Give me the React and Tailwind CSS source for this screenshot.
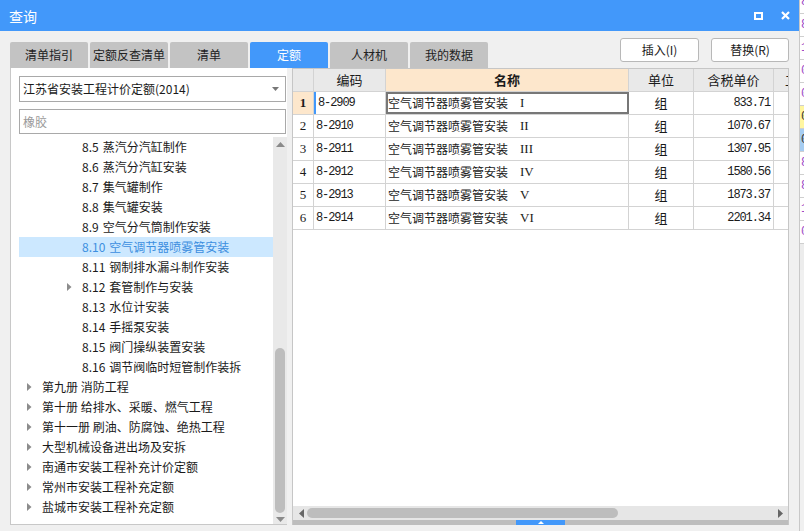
import React from "react";

const sub = [
  ["8.5", "蒸汽分汽缸制作"],
  ["8.6", "蒸汽分汽缸安装"],
  ["8.7", "集气罐制作"],
  ["8.8", "集气罐安装"],
  ["8.9", "空气分气筒制作安装"],
  ["8.10", "空气调节器喷雾管安装", "sel"],
  ["8.11", "钢制排水漏斗制作安装"],
  ["8.12", "套管制作与安装", "arrow"],
  ["8.13", "水位计安装"],
  ["8.14", "手摇泵安装"],
  ["8.15", "阀门操纵装置安装"],
  ["8.16", "调节阀临时短管制作装拆"],
];
const top = [
  "第九册 消防工程",
  "第十册 给排水、采暖、燃气工程",
  "第十一册 刷油、防腐蚀、绝热工程",
  "大型机械设备进出场及安拆",
  "南通市安装工程补充计价定额",
  "常州市安装工程补充定额",
  "盐城市安装工程补充定额",
];
const rows = [
  ["8-2909", "I", "833.71"],
  ["8-2910", "II", "1070.67"],
  ["8-2911", "III", "1307.95"],
  ["8-2912", "IV", "1580.56"],
  ["8-2913", "V", "1873.37"],
  ["8-2914", "VI", "2201.34"],
];
const strip = [
  ["8", ""],
  ["8", ""],
  ["1", ""],
  ["0", ""],
  ["0", ""],
  ["0", "y"],
  ["0", "b"],
  ["8", ""],
  ["8", ""],
  ["1", ""],
  ["0", ""],
];

const font = { fontFamily: '"Noto Sans CJK SC", "Noto Sans", sans-serif' };

function Arrow() {
  return (
    <svg width="5" height="8" viewBox="0 0 5 8" className="shrink-0">
      <path d="M0 0 L4.5 4 L0 8 Z" fill="#8c8c8c" />
    </svg>
  );
}

export default function App() {
  return (
    <div className="w-[804px] h-[531px] flex overflow-hidden bg-[#f0f0f0] text-[#1a1a1a]" style={font}>
      {/* window */}
      <div className="w-[799px] h-full flex flex-col bg-[#f0f0f0] shrink-0">
        {/* title */}
        <div className="h-[31px] bg-[#4298fa] flex items-center pl-[9px] pr-[9px] text-white">
          <span className="text-[14px] leading-none">查询</span>
          <div className="flex-1" />
          <div className="w-[9px] h-[8px] border-2 border-white mr-[18px]" />
          <svg width="9" height="9" viewBox="0 0 9 9">
            <path d="M1 1 L8 8 M8 1 L1 8" stroke="white" strokeWidth="2.2" />
          </svg>
        </div>
        {/* tabs & buttons */}
        <div className="h-[37px] flex pl-[10px] pr-[10px]">
          <div className="flex items-end gap-[2px] text-[12px]">
            {["清单指引", "定额反查清单", "清单", "定额", "人材机", "我的数据"].map((t) => (
              <div
                key={t}
                className={
                  "w-[78px] h-[26px] flex items-center justify-center rounded-t-[2px] " +
                  (t === "定额" ? "bg-[#4298fa] text-white" : "bg-[#c3c3c3] text-[#222]")
                }
              >
                {t}
              </div>
            ))}
          </div>
          <div className="flex-1" />
          <div className="flex gap-[12px] pt-[7px] text-[12px]">
            <div className="w-[79px] h-[24px] bg-white border border-[#b8b8b8] rounded-[3px] flex items-center justify-center">插入(I)</div>
            <div className="w-[78px] h-[24px] bg-white border border-[#b8b8b8] rounded-[3px] flex items-center justify-center">替换(R)</div>
          </div>
        </div>
        {/* content */}
        <div className="flex-1 flex gap-[5px] pl-[10px] pr-[10px] pb-[6px] min-h-0">
          {/* left panel */}
          <div className="w-[277px] bg-white border-l border-b border-[#c8c8c8] flex flex-col min-h-0">
            <div className="ml-[8px] mt-[8px] w-[267px] h-[26px] border border-[#a9a9a9] flex items-center pl-[3px] pr-[6px] text-[12px]">
              <span className="flex-1">江苏省安装工程计价定额(2014)</span>
              <svg width="7" height="4" viewBox="0 0 7 4"><path d="M0 0 L7 0 L3.5 4 Z" fill="#777" /></svg>
            </div>
            <div className="ml-[8px] mt-[7px] w-[267px] h-[25px] border border-[#a9a9a9] flex items-center pl-[3px] text-[12px] text-[#9a9a9a]">
              橡胶
            </div>
            <div className="flex-1 flex mt-[3px] min-h-0">
              <div className="flex-1 ml-[8px] flex flex-col text-[12px]">
                {sub.map(([n, t, f]) => (
                  <div
                    key={n}
                    className={"h-[20px] flex items-center " + (f === "sel" ? "bg-[#cce8ff] text-[#3d8fe0]" : "")}
                  >
                    <div className="w-[48px] shrink-0" />
                    <div className="w-[15px] shrink-0 flex items-center">{f === "arrow" ? <Arrow /> : null}</div>
                    <span>{n}</span>
                    <span className="ml-[4px]">{t}</span>
                  </div>
                ))}
                {top.map((t) => (
                  <div key={t} className="h-[20px] flex items-center">
                    <div className="w-[8px] shrink-0" />
                    <div className="w-[15px] shrink-0 flex items-center"><Arrow /></div>
                    <span>{t}</span>
                  </div>
                ))}
              </div>
              <div className="w-[14px] bg-[#e9e9e9] flex flex-col items-center">
                <svg width="9" height="5" viewBox="0 0 9 5" className="mt-[5px]"><path d="M0 5 L4.5 0 L9 5 Z" fill="#8a8a8a" /></svg>
                <div className="flex-1" />
                <div className="w-[10px] h-[165px] rounded-full bg-[#bdbdbd]" />
                <svg width="9" height="5" viewBox="0 0 9 5" className="mt-[4px] mb-[2px]"><path d="M0 0 L4.5 5 L9 0 Z" fill="#8a8a8a" /></svg>
              </div>
            </div>
          </div>
          {/* grid */}
          <div className="w-[497px] flex flex-col border-l border-t border-r border-[#c6c6c6] bg-white min-h-0">
            <div className="flex-1 flex flex-col">
              <div className="h-[23px] flex text-[13px] bg-[#e9e9e9] border-b border-[#d3d3d3]">
                <div className="w-[21px] border-r border-[#d3d3d3]" />
                <div className="w-[72px] border-r border-[#d3d3d3] flex items-center justify-center">编码</div>
                <div className="w-[243px] border-r border-[#d3d3d3] bg-[#fde7cc] flex items-center justify-center font-bold">名称</div>
                <div className="w-[65px] border-r border-[#d3d3d3] flex items-center justify-center">单位</div>
                <div className="w-[80px] border-r border-[#d3d3d3] flex items-center justify-center">含税单价</div>
                <div className="flex-1 overflow-hidden flex items-center pl-[11px] whitespace-nowrap">工</div>
              </div>
              {rows.map(([c, r, p], i) => (
                <div key={c} className="h-[23px] flex text-[12px] border-b border-[#d3d3d3]">
                  <div
                    className={
                      "w-[21px] border-r border-[#d3d3d3] flex items-center justify-center text-[13px] " +
                      (i === 0 ? "bg-[#fde7cc] font-bold" : "")
                    }
                    style={{ fontFamily: '"Liberation Serif", serif' }}
                  >
                    {i + 1}
                  </div>
                  <div
                    className={
                      "w-[72px] border-r border-[#d3d3d3] flex items-center pl-[2px] text-[12px] tracking-[-1.1px] " +
                      (i === 0 ? "border-l-2 border-l-[#4298fa]" : "")
                    }
                    style={{ fontFamily: '"Liberation Mono", monospace' }}
                  >
                    {c}
                  </div>
                  <div
                    className={
                      "w-[243px] border-r border-[#d3d3d3] flex items-center pl-[2px] " +
                      (i === 0 ? "outline-2 outline-[#777] -outline-offset-2" : "")
                    }
                  >
                    <span>空气调节器喷雾管安装</span>
                    <span className="ml-[12px] text-[13px]" style={{ fontFamily: '"Liberation Serif", serif' }}>{r}</span>
                  </div>
                  <div className="w-[65px] border-r border-[#d3d3d3] flex items-center justify-center text-[13px]">组</div>
                  <div
                    className="w-[80px] border-r border-[#d3d3d3] flex items-center justify-end pr-[3px] text-[12px] tracking-[-1.1px]"
                    style={{ fontFamily: '"Liberation Mono", monospace' }}
                  >
                    {p}
                  </div>
                  <div className="flex-1" />
                </div>
              ))}
            </div>
            {/* h scroll */}
            <div className="h-[14px] bg-[#e6e6e6] flex items-center pl-[6px] pr-[5px]">
              <svg width="5" height="9" viewBox="0 0 5 9"><path d="M5 0 L0 4.5 L5 9 Z" fill="#666" /></svg>
              <div className="ml-[3px] w-[311px] h-[10px] rounded-full bg-[#bdbdbd]" />
              <div className="flex-1" />
              <svg width="5" height="9" viewBox="0 0 5 9"><path d="M0 0 L5 4.5 L0 9 Z" fill="#666" /></svg>
            </div>
            <div className="h-[5px] bg-[#bdbdbd] flex">
              <div className="w-[223px]" />
              <div className="w-[49px] bg-[#4298fa] flex items-center justify-center">
                <svg width="6" height="3" viewBox="0 0 6 3"><path d="M0 3 L3 0 L6 3 Z" fill="white" /></svg>
              </div>
            </div>
          </div>
        </div>
      </div>
      {/* background strip */}
      <div className="flex-1 flex flex-col border-l border-[#c8c8c8] bg-white overflow-hidden">
        <div className="mt-[-9px] flex flex-col">
          {strip.map(([t, c], i) => (
            <div
              key={i}
              className={
                "h-[23px] border-b border-[#cfcfcf] flex items-center text-[12px] text-[#9a48c8] pl-[1px] " +
                (c === "y" ? "bg-[#fff6a0] text-[#333]" : c === "b" ? "bg-[#a6cdf2] text-[#333]" : "")
              }
              style={{ fontFamily: '"Liberation Mono", monospace' }}
            >
              {t}
            </div>
          ))}
        </div>
        <div className="h-[26px] bg-[#ececec]" />
        <div className="flex-1 bg-[#f0f0f0]" />
      </div>
    </div>
  );
}
